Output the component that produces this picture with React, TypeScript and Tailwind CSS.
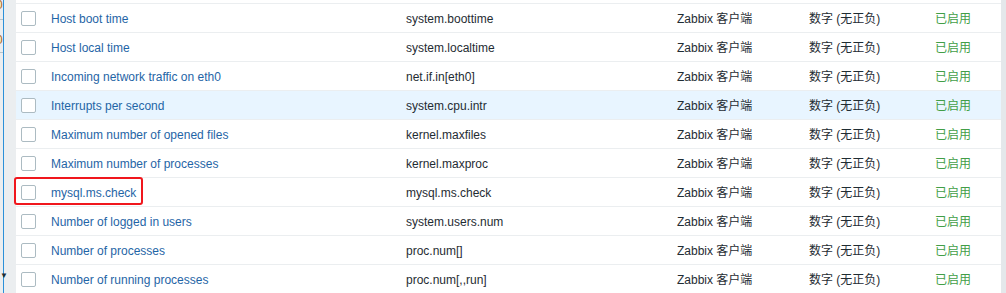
const rows = [
    { name: 'Host boot time', key: 'system.boottime' },
    { name: 'Host local time', key: 'system.localtime' },
    { name: 'Incoming network traffic on eth0', key: 'net.if.in[eth0]' },
    { name: 'Interrupts per second', key: 'system.cpu.intr', hover: true },
    { name: 'Maximum number of opened files', key: 'kernel.maxfiles' },
    { name: 'Maximum number of processes', key: 'kernel.maxproc' },
    { name: 'mysql.ms.check', key: 'mysql.ms.check', marked: true },
    { name: 'Number of logged in users', key: 'system.users.num' },
    { name: 'Number of processes', key: 'proc.num[]' },
    { name: 'Number of running processes', key: 'proc.num[,,run]' },
];

function Row({ name, itemKey, hover, marked }: { name: string; itemKey: string; hover?: boolean; marked?: boolean }) {
    return (
        <div className={`relative flex h-[29px] items-center border-b border-[#ebeef0] ${hover ? 'bg-[#e8f5ff]' : 'bg-white'}`}>
            <div className="w-[35px] pl-[5px]">
                <span className="block w-[15px] h-[15px] rounded-[2px] border border-[#acbbc2] bg-white" />
            </div>
            <div className="w-[355px] pt-px text-[#1f65a6]">{name}</div>
            <div className="w-[271px] pt-px text-[#1f2c33]">{itemKey}</div>
            <div className="w-[132px] pt-px text-[#1f2c33]">Zabbix 客户端</div>
            <div className="w-[126px] pt-px text-[#1f2c33]">数字 (无正负)</div>
            <div className="pt-px text-[#429e47]">已启用</div>
            {marked && (
                <div className="absolute left-[-2px] top-[-1px] w-[129px] h-[28px] border-2 border-[#f0171d] rounded-[3px]" />
            )}
        </div>
    );
}

export default function App() {
    return (
        <div className="flex w-[1006px] h-[293px] overflow-hidden bg-white text-[12px] font-['Liberation_Sans','Noto_Sans_CJK_SC',sans-serif]">
            {/* left sidebar edge */}
            <div className="relative w-[16px] shrink-0 bg-[#ebeef0]">
                <div className="absolute left-[3px] top-0 bottom-0 w-px bg-[#2b90d9]" />
                <div className="absolute left-0 top-[19px] w-[3px] h-px bg-[#b9c3c9]" />
                <div className="absolute left-0 top-[52px] w-[3px] h-px bg-[#b9c3c9]" />
                <span className="absolute left-[-4px] top-[-1px] text-[#b06a10] leading-none">0</span>
                <span className="absolute left-[-4px] top-[34px] text-[#b06a10] leading-none">0</span>
                <span className="absolute left-0 top-[272px] text-[8px] text-[#1f2c33] leading-none">▼</span>
            </div>
            {/* table */}
            <div className="w-[985px] shrink-0">
                <div className="h-[4px] border-b border-[#ebeef0]" />
                {rows.map((r) => (
                    <Row key={r.name} name={r.name} itemKey={r.key} hover={r.hover} marked={r.marked} />
                ))}
            </div>
            <div className="flex-1 bg-[#e4e8eb]" />
        </div>
    );
}
